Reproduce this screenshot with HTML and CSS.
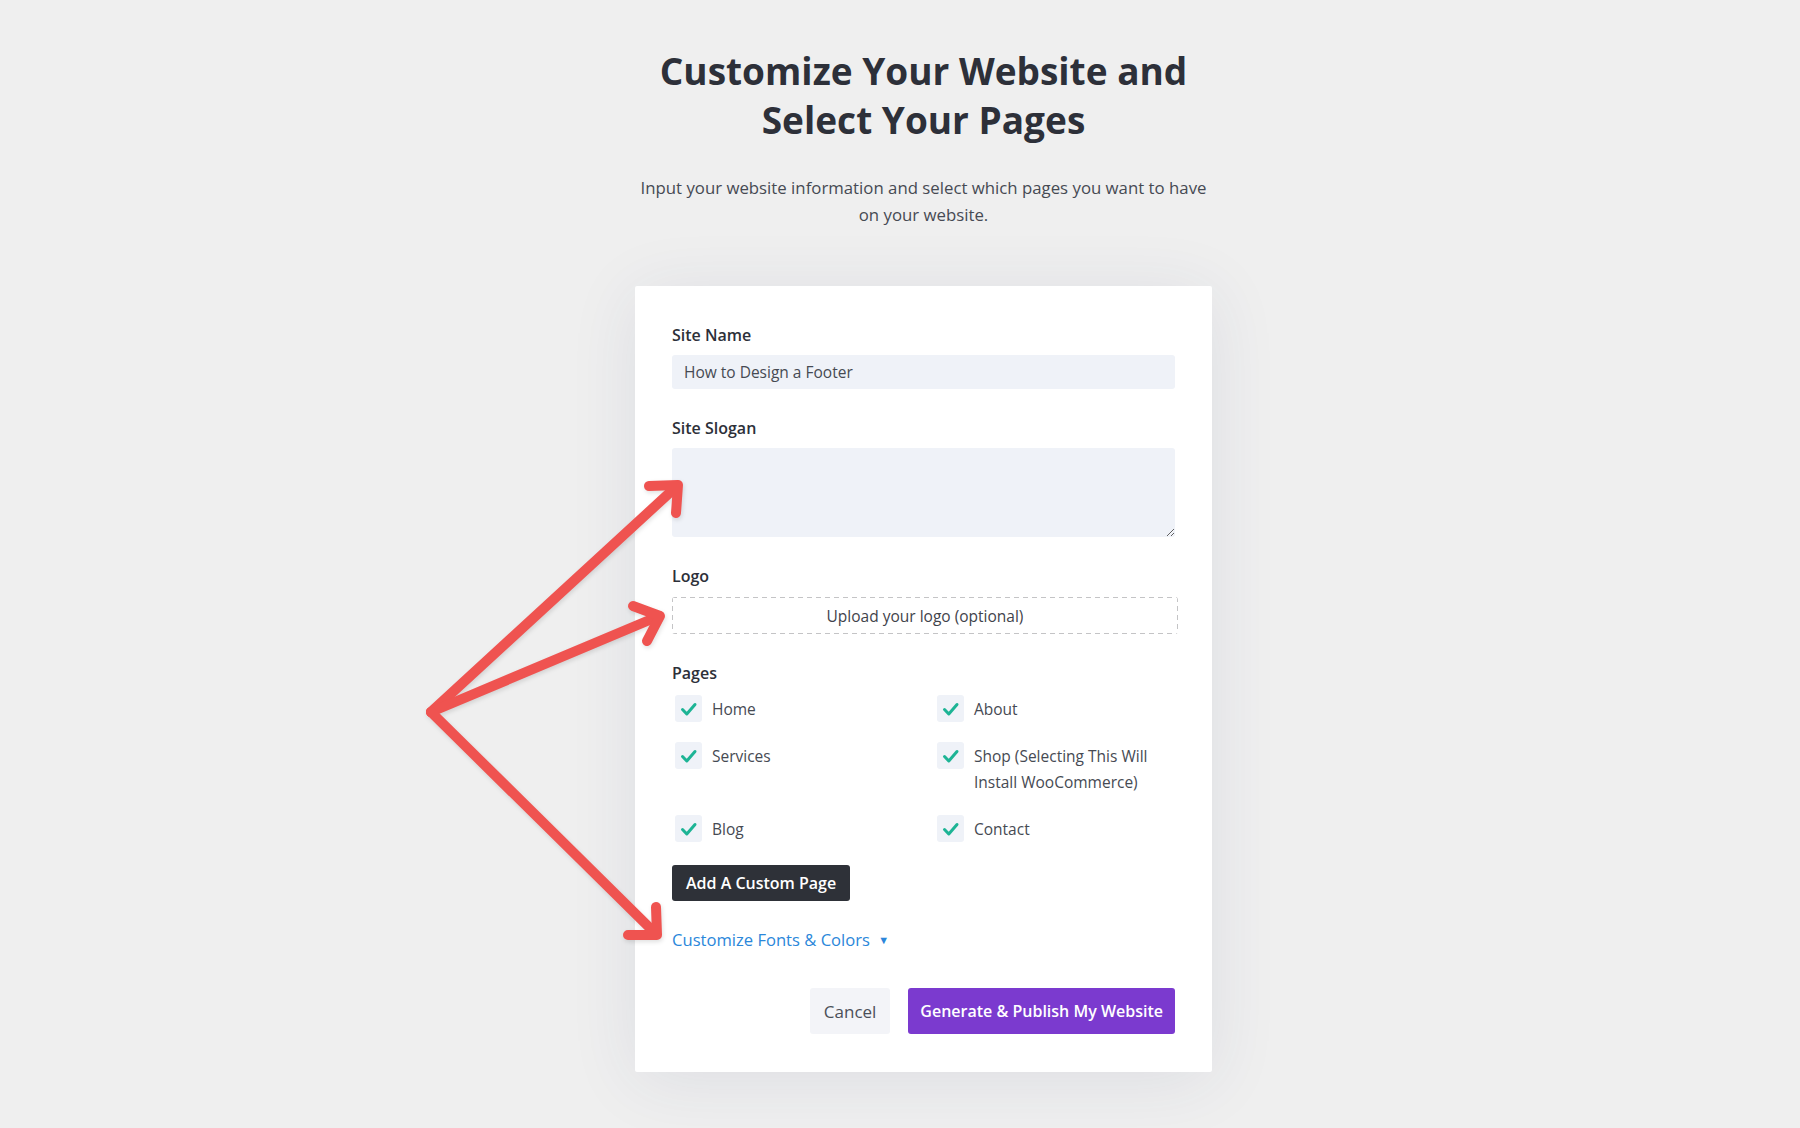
FILE: index.html
```html
<!DOCTYPE html>
<html lang="en">
<head>
<meta charset="utf-8">
<title>Customize Your Website and Select Your Pages</title>
<link rel="stylesheet" href="styles.css">
</head>
<body>
<div class="page">
  <h1 class="title">Customize Your Website and<br>Select Your Pages</h1>
  <p class="subtitle">Input your website information and select which pages you want to have<br>on your website.</p>

  <div class="card">
    <div class="field">
      <label class="field-label">Site Name</label>
      <input class="text-input" type="text" value="How to Design a Footer">
    </div>
    <div class="field">
      <label class="field-label">Site Slogan</label>
      <textarea class="text-area"></textarea>
    </div>
    <div class="field field-logo">
      <label class="field-label">Logo</label>
      <div class="upload">Upload your logo (optional)</div>
    </div>
    <div class="field field-pages">
      <label class="field-label">Pages</label>
      <div class="pages-grid">
        <div class="page-item"><span class="check"><svg viewBox="0 0 27 27" width="27" height="27"><path d="M7.5 14.5 L11.8 19 L20 9.5" /></svg></span><span class="page-name">Home</span></div>
        <div class="page-item"><span class="check"><svg viewBox="0 0 27 27" width="27" height="27"><path d="M7.5 14.5 L11.8 19 L20 9.5" /></svg></span><span class="page-name">About</span></div>
        <div class="page-item"><span class="check"><svg viewBox="0 0 27 27" width="27" height="27"><path d="M7.5 14.5 L11.8 19 L20 9.5" /></svg></span><span class="page-name">Services</span></div>
        <div class="page-item"><span class="check"><svg viewBox="0 0 27 27" width="27" height="27"><path d="M7.5 14.5 L11.8 19 L20 9.5" /></svg></span><span class="page-name">Shop (Selecting This Will Install WooCommerce)</span></div>
        <div class="page-item"><span class="check"><svg viewBox="0 0 27 27" width="27" height="27"><path d="M7.5 14.5 L11.8 19 L20 9.5" /></svg></span><span class="page-name">Blog</span></div>
        <div class="page-item"><span class="check"><svg viewBox="0 0 27 27" width="27" height="27"><path d="M7.5 14.5 L11.8 19 L20 9.5" /></svg></span><span class="page-name">Contact</span></div>
      </div>
      <button class="btn-dark" type="button">Add A Custom Page</button>
    </div>
    <a class="customize-link" href="#">Customize Fonts &amp; Colors <span class="caret">&#9660;</span></a>
    <div class="actions">
      <button class="btn-cancel" type="button">Cancel</button>
      <button class="btn-primary" type="button">Generate &amp; Publish My Website</button>
    </div>
  </div>

  <svg class="arrows" width="1800" height="1128" viewBox="0 0 1800 1128">
    <g fill="none" stroke="#ef5350" stroke-width="10" stroke-linecap="round" stroke-linejoin="round">
      <path d="M431 712 L677 486" />
      <path d="M649 486 L678 485 L676 513" />
      <path d="M431 712 L659 616" />
      <path d="M633 606 L660 616 L647 641" />
      <path d="M431 712 L656 934" />
      <path d="M628 935 L657 935 L656 907" />
    </g>
  </svg>
</div>
</body>
</html>
```
FILE: styles.css
```css
html, body {
  margin: 0;
  padding: 0;
}

body {
  background: #efefef;
  font-family: "Open Sans", "Noto Sans", sans-serif;
  color: #2d3039;
}

.page {
  position: relative;
  min-height: 1128px;
  box-sizing: border-box;
  padding-top: 46px;
  padding-left: 47px;
  display: flex;
  flex-direction: column;
  align-items: center;
}

.title {
  margin: 0;
  font-size: 37px;
  line-height: 49px;
  font-weight: 700;
  color: #2d3039;
  text-align: center;
}

.subtitle {
  margin: 30px 0 0;
  font-size: 16.8px;
  line-height: 27px;
  color: #464a53;
  text-align: center;
}

.card {
  margin-top: 58px;
  width: 577px;
  box-sizing: border-box;
  padding: 38px 37px 38px 37px;
  background: #ffffff;
  border-radius: 2px;
  box-shadow: 0 8px 70px rgba(40, 55, 110, 0.09);
}

.field {
  margin-bottom: 28px;
}

.field-label {
  display: block;
  font-size: 16px;
  line-height: 22px;
  font-weight: 600;
  color: #2d3039;
  margin-bottom: 9px;
}

.text-input {
  display: block;
  width: 100%;
  height: 34px;
  box-sizing: border-box;
  border: none;
  border-radius: 3px;
  background: #eff2f8;
  padding: 0 12px;
  font-family: "Open Sans", sans-serif;
  font-size: 15.5px;
  color: #464a53;
  outline: none;
}

.text-area {
  display: block;
  width: 100%;
  height: 89px;
  box-sizing: border-box;
  border: none;
  border-radius: 3px;
  background: #eff2f8;
  padding: 8px 13px;
  font-family: "Open Sans", sans-serif;
  font-size: 15px;
  resize: vertical;
  outline: none;
}

.field-logo .field-label {
  margin-bottom: 10px;
}

.upload {
  height: 37px;
  box-sizing: border-box;
  width: calc(100% + 3px);
  border-radius: 3px;
  background-image:
    repeating-linear-gradient(90deg, #c4c4c6 0 5px, transparent 5px 9px),
    repeating-linear-gradient(90deg, #c4c4c6 0 5px, transparent 5px 9px),
    repeating-linear-gradient(180deg, #c4c4c6 0 5px, transparent 5px 9px),
    repeating-linear-gradient(180deg, #c4c4c6 0 5px, transparent 5px 9px);
  background-size: 100% 1px, 100% 1px, 1px 100%, 1px 100%;
  background-position: 0 0, 0 100%, 0 0, 100% 0;
  background-repeat: no-repeat;
  display: flex;
  align-items: center;
  justify-content: center;
  font-size: 15.5px;
  color: #3f434b;
}

.field-pages {
  margin-bottom: 28px;
}

.field-pages .field-label {
  margin-bottom: 11px;
}

.pages-grid {
  display: grid;
  grid-template-columns: 1fr 1fr;
  column-gap: 21px;
  row-gap: 20px;
  margin-bottom: 23px;
}

.page-item {
  display: flex;
  align-items: flex-start;
  gap: 10px;
}

.check {
  flex: none;
  width: 27px;
  height: 27px;
  margin-left: 3px;
  border-radius: 3px;
  background: #eff2f8;
  display: block;
}

.check svg {
  display: block;
}

.check path {
  fill: none;
  stroke: #1db495;
  stroke-width: 3;
  stroke-linecap: round;
  stroke-linejoin: round;
}

.page-name {
  font-size: 15.5px;
  line-height: 26px;
  color: #464a53;
  padding-top: 1px;
}

.btn-dark {
  display: block;
  height: 36px;
  padding: 0 14px;
  border: none;
  border-radius: 3px;
  background: #2e3138;
  color: #ffffff;
  font-family: "Open Sans", sans-serif;
  font-size: 16px;
  font-weight: 600;
  cursor: pointer;
}

.customize-link {
  display: block;
  font-size: 16.6px;
  line-height: 22px;
  font-weight: 500;
  color: #2b87da;
  text-decoration: none;
}

.caret {
  font-size: 11px;
  vertical-align: 2px;
  margin-left: 4px;
}

.actions {
  margin-top: 37px;
  display: flex;
  justify-content: flex-end;
  gap: 18px;
}

.btn-cancel {
  height: 46px;
  padding: 0 14px;
  border: none;
  border-radius: 3px;
  background: #f3f4f8;
  color: #4b4f58;
  font-family: "Open Sans", sans-serif;
  font-size: 17px;
  cursor: pointer;
}

.btn-primary {
  height: 46px;
  padding: 0 12px;
  border: none;
  border-radius: 3px;
  background: #7b3acf;
  color: #ffffff;
  font-family: "Open Sans", sans-serif;
  font-size: 16px;
  font-weight: 600;
  cursor: pointer;
}

.arrows {
  position: absolute;
  top: 0;
  left: 0;
  pointer-events: none;
  filter: drop-shadow(1px 2px 2px rgba(0, 0, 0, 0.12));
}
```
